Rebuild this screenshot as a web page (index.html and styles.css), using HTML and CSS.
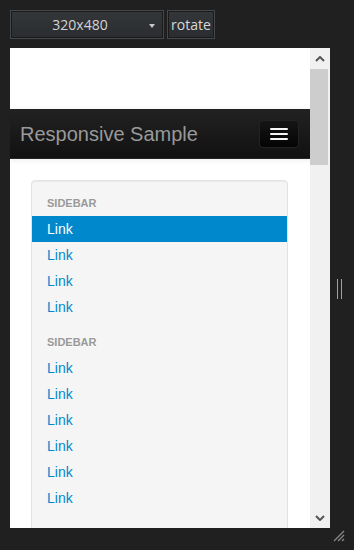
FILE: index.html
```html
<!DOCTYPE html>
<html lang="en">
<head>
  <meta charset="UTF-8">
  <meta name="viewport" content="width=device-width, initial-scale=1.0">
  <title>Responsive Sample</title>
  <link rel="stylesheet" href="styles.css">
</head>
<body>
  <div class="toolbar">
    <div class="size-select">
      <span>320x480</span>
      <span class="caret"></span>
    </div>
    <button class="rotate">rotate</button>
  </div>

  <div class="stage">
    <div class="device">
      <div class="viewport">
        <div class="navbar">
          <a href="#" class="brand">Responsive Sample</a>
          <button class="btn-navbar">
            <span class="icon-bar"></span>
            <span class="icon-bar"></span>
            <span class="icon-bar"></span>
          </button>
        </div>

        <div class="well">
          <ul class="nav-list">
            <li class="nav-header">Sidebar</li>
            <li class="active"><a href="#">Link</a></li>
            <li><a href="#">Link</a></li>
            <li><a href="#">Link</a></li>
            <li><a href="#">Link</a></li>
            <li class="nav-header">Sidebar</li>
            <li><a href="#">Link</a></li>
            <li><a href="#">Link</a></li>
            <li><a href="#">Link</a></li>
            <li><a href="#">Link</a></li>
            <li><a href="#">Link</a></li>
            <li><a href="#">Link</a></li>
          </ul>
        </div>
      </div>

      <div class="scrollbar">
        <div class="scroll-btn">
          <svg width="10" height="6" viewBox="0 0 10 6"><polyline points="1,5 5,1 9,5" fill="none" stroke="#555" stroke-width="2"/></svg>
        </div>
        <div class="scroll-thumb"></div>
        <div class="scroll-btn bottom">
          <svg width="10" height="6" viewBox="0 0 10 6"><polyline points="1,1 5,5 9,1" fill="none" stroke="#555" stroke-width="2"/></svg>
        </div>
      </div>
    </div>

    <div class="side">
      <div class="handle"></div>
      <svg class="grip" width="12" height="12" viewBox="0 0 12 12">
        <line x1="1" y1="11" x2="11" y2="1" stroke="#888" stroke-width="1.2"/>
        <line x1="5" y1="11" x2="11" y2="5" stroke="#888" stroke-width="1.2"/>
        <line x1="9" y1="11" x2="11" y2="9" stroke="#888" stroke-width="1.2"/>
      </svg>
    </div>
  </div>
</body>
</html>
```

FILE: styles.css
```css
body {
  margin: 0;
  padding: 0;
  background-color: #202020;
  font-family: "Open Sans", sans-serif;
  overflow: hidden;
}

.toolbar {
  display: flex;
  gap: 3px;
  padding: 10px 10px 0;
  height: 29px;
}
.size-select {
  width: 154px;
  box-sizing: border-box;
  border: 1px solid #45484a;
  background: linear-gradient(#34373a, #2a2c2f);
  box-shadow: inset 0 0 0 1px #1a1a1a;
  color: #d4d4d4;
  font-size: 14px;
  display: flex;
  align-items: center;
  justify-content: center;
  padding-right: 14px;
  position: relative;
}
.caret {
  position: absolute;
  right: 8px;
  top: 13px;
  border-left: 3px solid transparent;
  border-right: 3px solid transparent;
  border-top: 4px solid #c8c8c8;
}
.rotate {
  box-sizing: border-box;
  width: 48px;
  height: 29px;
  border: 1px solid #45484a;
  background: linear-gradient(#34373a, #2a2c2f);
  box-shadow: inset 0 0 0 1px #1a1a1a;
  color: #d8d8d8;
  font-family: "Open Sans", sans-serif;
  font-size: 14px;
  padding: 0;
}

.stage {
  display: flex;
  padding-left: 10px;
  margin-top: 9px;
}
.device {
  display: flex;
  width: 320px;
  height: 480px;
  background-color: #fff;
  overflow: hidden;
}
.viewport {
  width: 300px;
  padding-top: 61px;
  font-family: "Liberation Sans", Arial, sans-serif;
}

.navbar {
  height: 50px;
  box-sizing: border-box;
  display: flex;
  align-items: center;
  justify-content: space-between;
  padding: 0 11px 0 10px;
  background: linear-gradient(#222, #111);
  border-bottom: 1px solid #252525;
  box-shadow: 0 1px 6px rgba(0, 0, 0, 0.08);
}
.brand {
  color: #999;
  font-size: 20px;
  text-decoration: none;
  margin-top: 1px;
}
.btn-navbar {
  width: 40px;
  height: 28px;
  box-sizing: border-box;
  background: linear-gradient(#151515, #040404);
  border: 1px solid #222;
  border-radius: 4px;
  display: flex;
  flex-direction: column;
  align-items: center;
  justify-content: center;
  gap: 3px;
  padding: 0;
  margin-top: 1px;
}
.icon-bar {
  display: block;
  width: 18px;
  height: 2px;
  border-radius: 1px;
  background-color: #f5f5f5;
}

.well {
  margin: 21px 22px 0 21px;
  padding: 9px 0 40px;
  background-color: #f5f5f5;
  border: 1px solid #e3e3e3;
  border-radius: 4px;
  box-shadow: inset 0 1px 1px rgba(0, 0, 0, 0.05);
}
.nav-list {
  list-style: none;
  margin: 0;
  padding: 0;
}
.nav-list li {
  line-height: 20px;
}
.nav-header {
  padding: 3px 15px;
  font-size: 11px;
  font-weight: bold;
  color: #999;
  text-transform: uppercase;
  text-shadow: 0 1px 0 rgba(255, 255, 255, 0.5);
}
.nav-list li + .nav-header {
  margin-top: 9px;
}
.nav-list a {
  display: block;
  padding: 3px 15px;
  font-size: 14px;
  color: #0088cc;
  text-decoration: none;
}
.nav-list .active a {
  background-color: #0088cc;
  color: #fff;
}

.scrollbar {
  width: 20px;
  display: flex;
  flex-direction: column;
  background-color: #f1f1f1;
}
.scroll-btn {
  height: 21px;
  display: flex;
  align-items: center;
  justify-content: center;
}
.scroll-btn.bottom {
  margin-top: auto;
}
.scroll-thumb {
  height: 96px;
  margin-right: 2px;
  background-color: #cdcdcd;
}

.side {
  width: 18px;
  height: 494px;
  display: flex;
  flex-direction: column;
  align-items: center;
}
.handle {
  margin-top: auto;
  width: 3px;
  height: 20px;
  border-left: 1px solid #a0a0a0;
  border-right: 1px solid #a0a0a0;
}
.grip {
  margin-top: auto;
}
```
